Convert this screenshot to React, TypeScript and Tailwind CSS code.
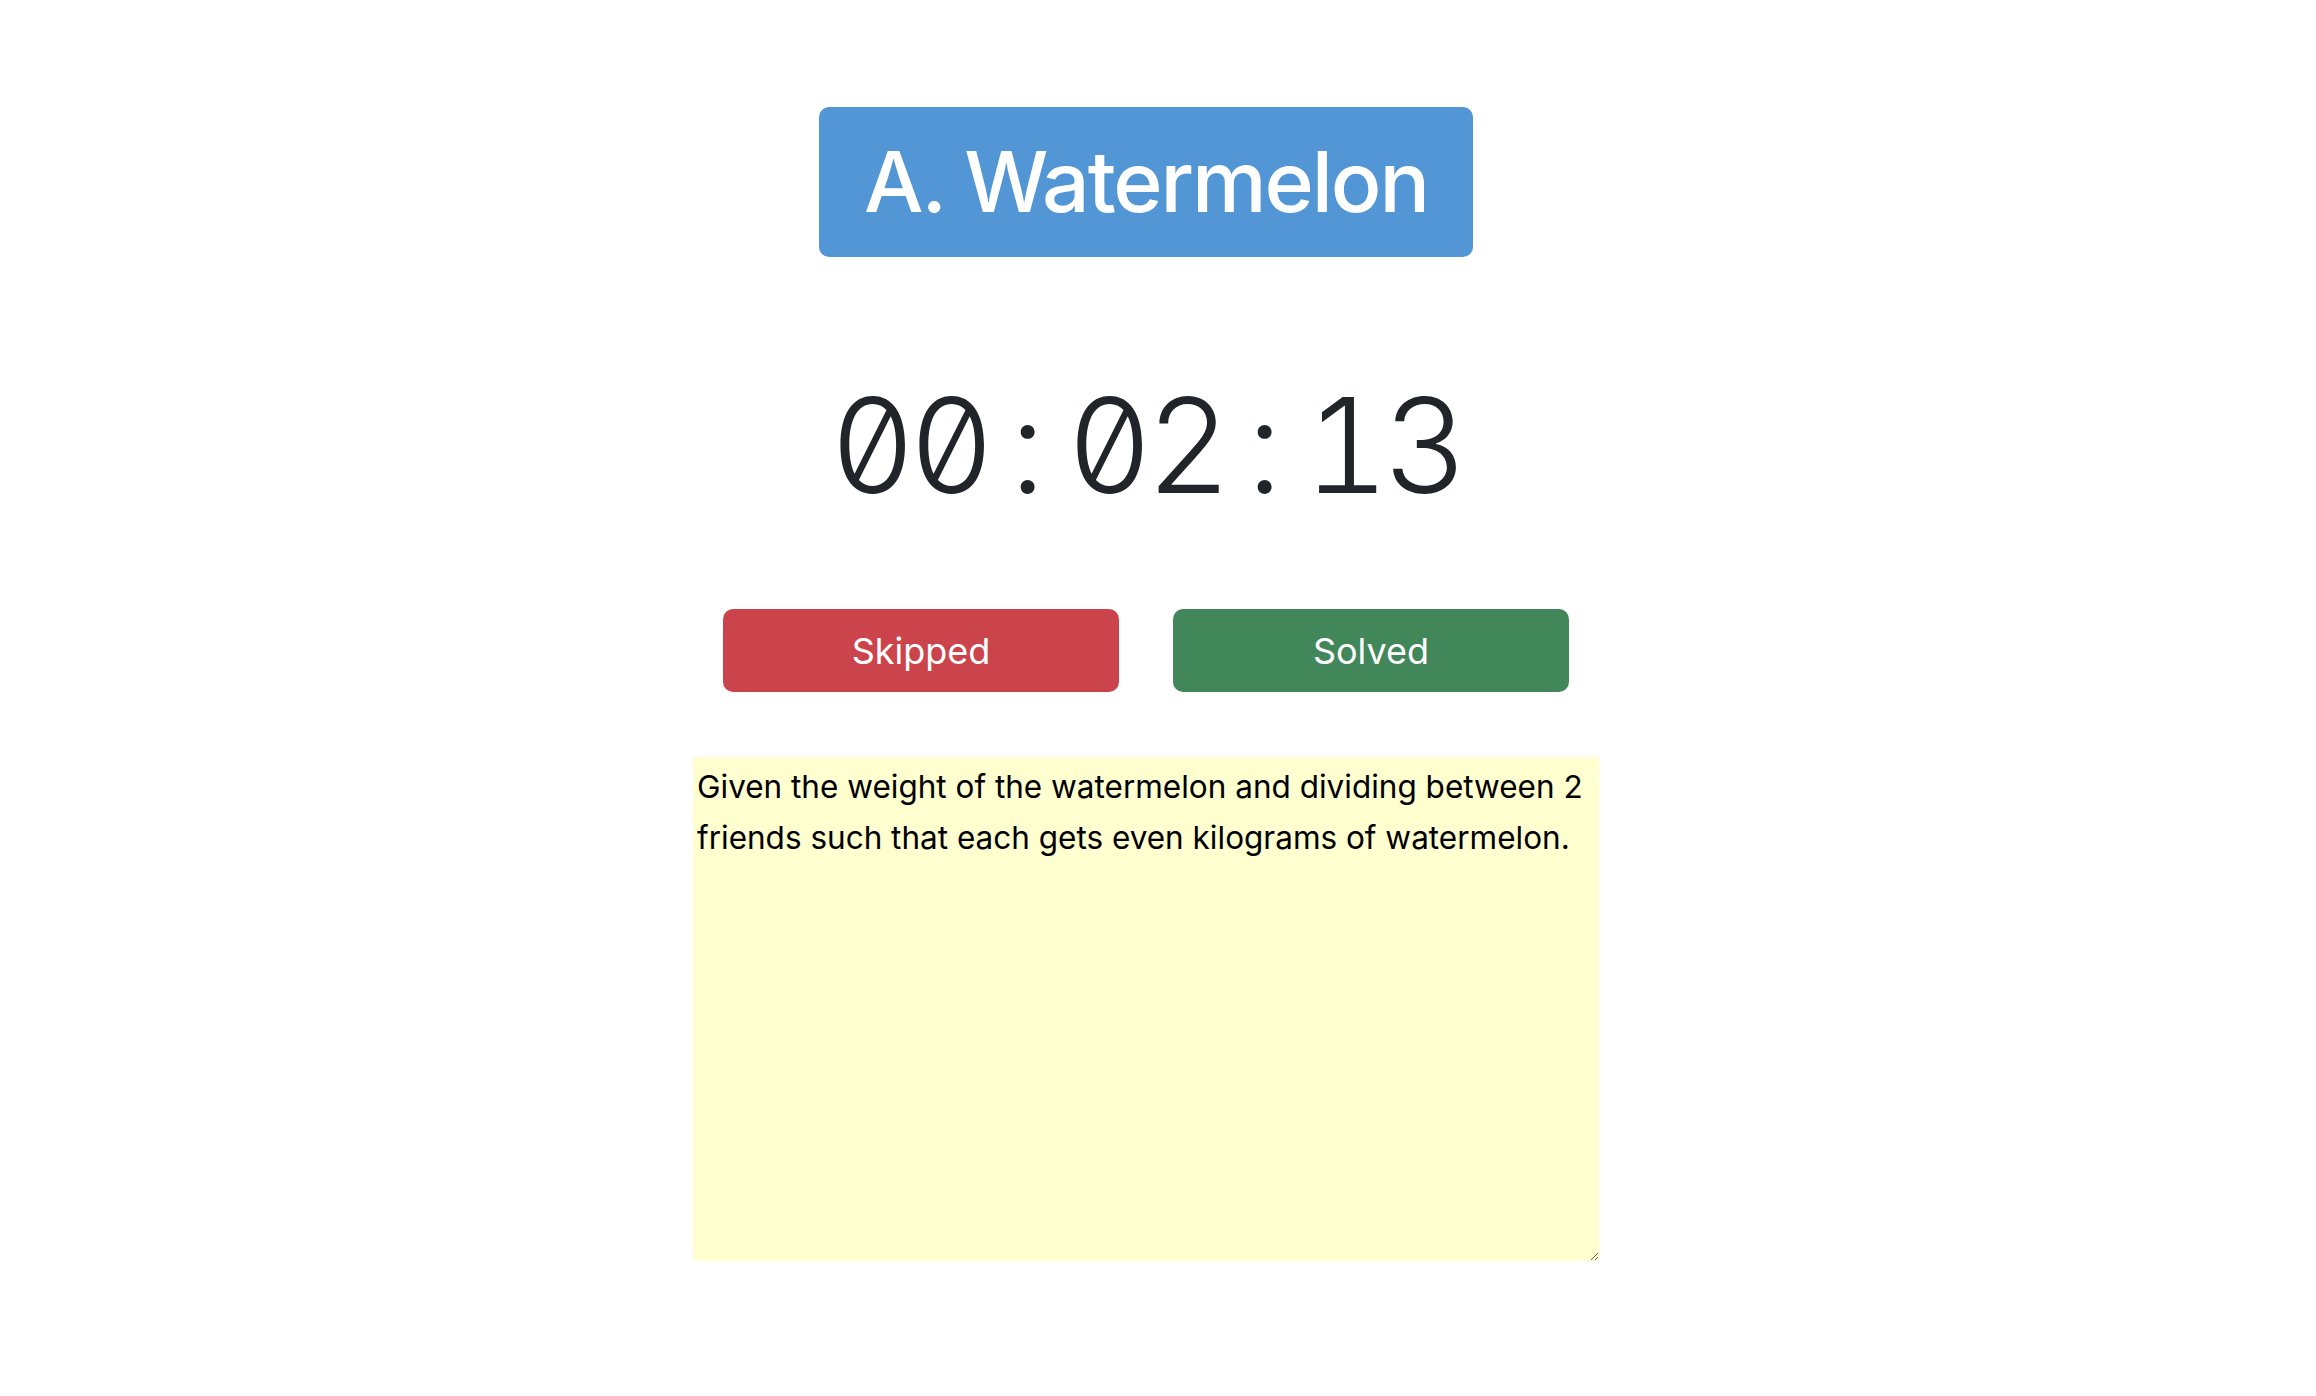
import React from 'react'

const timer = ['0', '0', ':', '0', '2', ':', '1', '3']

const App: React.FC = () => {
  return (
    <div className="min-h-screen bg-white pr-[24px] flex flex-col items-center font-['Inter',sans-serif]">
      <h1 className="mt-[107px] h-[150px] px-[45px] flex items-center rounded-[10px] bg-[#5296d5] text-white text-[84px] font-medium tracking-tight leading-none">
        A. Watermelon
      </h1>

      <div className="mt-[88px] h-[200px] flex items-center text-[132px] font-light leading-none text-[#212529] slashed-zero tabular-nums">
        {timer.map((c, i) => (
          <span key={i} className="inline-block w-[79px] text-center">{c}</span>
        ))}
      </div>

      <div className="mt-[64px] flex gap-[54px]">
        <button className="w-[396px] h-[83px] rounded-[10px] bg-[#cc444b] text-white text-[36px]">Skipped</button>
        <button className="w-[396px] h-[83px] rounded-[10px] bg-[#41875a] text-white text-[36px]">Solved</button>
      </div>

      <textarea
        className="mt-[65px] w-[906px] h-[504px] p-[4px] bg-[#ffffd0] text-black text-[31.5px] leading-[51px] border-0 outline-none"
        defaultValue="Given the weight of the watermelon and dividing between 2 friends such that each gets even kilograms of watermelon."
      />
    </div>
  )
}

export default App
